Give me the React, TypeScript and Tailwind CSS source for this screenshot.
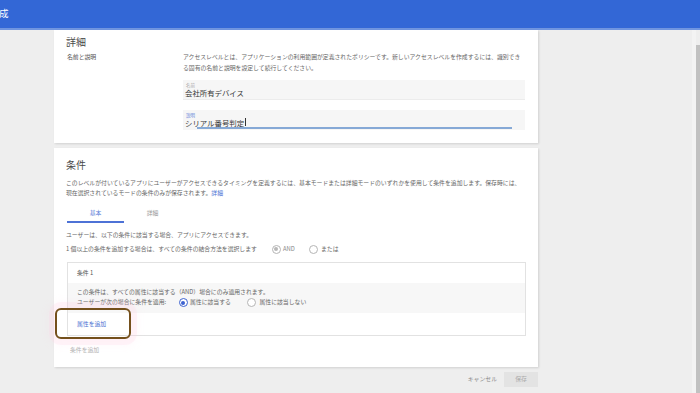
function Radio({ checked, tone }: { checked?: boolean; tone: "blue" | "gray" }) {
  const ring = tone === "blue" ? "border-[#3d62d0]" : "border-[#b5b5b5]";
  const dot = tone === "blue" ? "bg-[#3d62d0]" : "bg-[#b8b8b8]";
  return (
    <span className={`flex h-[9px] w-[9px] shrink-0 items-center justify-center rounded-full border bg-white ${ring}`}>
      {checked && <span className={`h-[4px] w-[4px] rounded-full ${dot}`} />}
    </span>
  );
}

export default function App() {
  return (
    <div className="relative h-[393px] w-[700px] overflow-hidden bg-[#eeeeee] font-['Noto_Sans_CJK_JP',sans-serif] text-[#666]">
      <header className="flex h-[30px] items-center border-b-2 border-[#7095e0] bg-[#3367d6]">
        <span className="-ml-[1px] text-[9.5px] leading-none text-white">成</span>
      </header>

      <div className="flex">
        <div className="w-[54px] shrink-0" />

        <main className="w-[484px] shrink-0">
          {/* 詳細 */}
          <section className="h-[113px] bg-white pl-[12px] pt-[6px] shadow-[1px_1px_2px_rgba(0,0,0,0.12)]">
            <h2 className="text-[10px] leading-[12px] text-[#4a4a4a]">詳細</h2>
            <div className="mt-[3px] flex">
              <p className="w-[117px] shrink-0 pl-[1px] text-[5.85px] leading-[11px] text-[#555]">名前と説明</p>
              <div className="w-[342px]">
                <p className="whitespace-nowrap text-[5.85px] leading-[11px]">
                  アクセスレベルとは、アプリケーションの利用範囲が定義されたポリシーです。新しいアクセスレベルを作成するには、識別でき
                  <br />
                  る固有の名前と説明を設定して続行してください。
                </p>
                <div className="mt-[7px] h-[20px] border-b border-[#ececec] bg-[#f6f6f6] px-[2px] pt-[2.5px]">
                  <p className="pl-[1px] text-[4.5px] leading-[5px] text-[#aaa]">名前</p>
                  <p className="text-[7.4px] leading-[9px] text-[#333]">会社所有デバイス</p>
                </div>
                <div className="mt-[10px] h-[20px] bg-[#f6f6f6] px-[2px] pt-[2.5px]">
                  <p className="pl-[1px] text-[4.5px] leading-[5px] text-[#5b7fd6]">説明</p>
                  <p className="flex items-center text-[7.4px] leading-[9px] text-[#333]">
                    シリアル番号判定
                    <span className="ml-[0.5px] h-[8px] w-[1px] bg-[#333]" />
                  </p>
                  <div className="ml-[12px] mt-[0.5px] h-[1.5px] w-[315px] bg-[#86a9d6]" />
                </div>
              </div>
            </div>
          </section>

          {/* 条件 */}
          <section className="mt-[5px] h-[219px] bg-white pl-[12px] pt-[11px] shadow-[1px_1px_2px_rgba(0,0,0,0.12)]">
            <h2 className="text-[10px] leading-[12px] text-[#4a4a4a]">条件</h2>
            <p className="mt-[7px] whitespace-nowrap text-[5.85px] leading-[10px]">
              このレベルが付いているアプリにユーザーがアクセスできるタイミングを定義するには、基本モードまたは詳細モードのいずれかを使用して条件を追加します。保存時には、
              <br />
              現在選択されているモードの条件のみが保存されます。<span className="text-[#4a72d4]">詳細</span>
            </p>

            <div className="ml-[1px] mt-[5px] flex text-[5.85px] leading-[10px]">
              <div className="w-[57px] border-b-2 border-[#4d72d6] pb-[3px] pt-[5px] text-center text-[#5c7ed8]">基本</div>
              <div className="w-[57px] pb-[3px] pt-[5px] text-center text-[#999]">詳細</div>
            </div>

            <p className="mt-[7px] text-[5.85px] leading-[10px]">ユーザーは、以下の条件に該当する場合、アプリにアクセスできます。</p>

            <div className="mt-[3px] flex h-[12px] items-center text-[5.85px]">
              <span className="w-[205.5px] whitespace-nowrap">1 個以上の条件を追加する場合は、すべての条件の結合方法を選択します</span>
              <Radio checked tone="gray" />
              <span className="ml-[2.5px] w-[26px] text-[#888]">AND</span>
              <Radio tone="gray" />
              <span className="ml-[3px]">または</span>
            </div>

            <div className="ml-[1px] mt-[7px] h-[74px] w-[459px] border border-[#e2e2e2]">
              <div className="flex h-[20px] items-center pl-[9px] text-[5.85px] text-[#555]">条件 1</div>
              <div className="h-[30px] bg-[#f7f7f7] pl-[9px] pt-[4px] text-[5.85px]">
                <p className="leading-[10px]">この条件は、すべての属性に該当する（AND）場合にのみ適用されます。</p>
                <div className="flex h-[11px] items-center">
                  <span className="w-[101.5px] whitespace-nowrap">ユーザーが次の場合に条件を適用:</span>
                  <Radio checked tone="blue" />
                  <span className="ml-[2.5px] w-[57px]">属性に該当する</span>
                  <Radio tone="gray" />
                  <span className="ml-[3.5px]">属性に該当しない</span>
                </div>
              </div>
              <p className="pl-[9px] pt-[6px] text-[5.85px] leading-[10px] text-[#4a6fd2]">属性を追加</p>
            </div>

            <p className="ml-[4px] mt-[9px] text-[5.85px] leading-[10px] text-[#b3b3b3]">条件を追加</p>
          </section>

          <div className="mt-[5px] flex h-[15px] items-center justify-end text-[5.85px]">
            <span className="mr-[7px] text-[#8a8a8a]">キャンセル</span>
            <span className="flex h-[15px] w-[34px] items-center justify-center bg-[#e3e3e3] text-[#aaa]">保存</span>
          </div>
        </main>

        <div className="flex-1" />
        <div className="h-[363px] w-[4px] bg-[#f3f3f3]" />
        <div className="mt-[15px] h-[348px] w-[4px] bg-[#c1c1c1]" />
      </div>

      {/* annotation highlight around 属性を追加 */}
      <div className="absolute left-[55px] top-[308px] h-[31px] w-[76px] rounded-[6px] border-2 border-[#74501c] shadow-[0_0_0_6px_rgba(255,205,228,0.18),0_0_8px_6px_rgba(255,205,228,0.15)]" />
    </div>
  );
}
